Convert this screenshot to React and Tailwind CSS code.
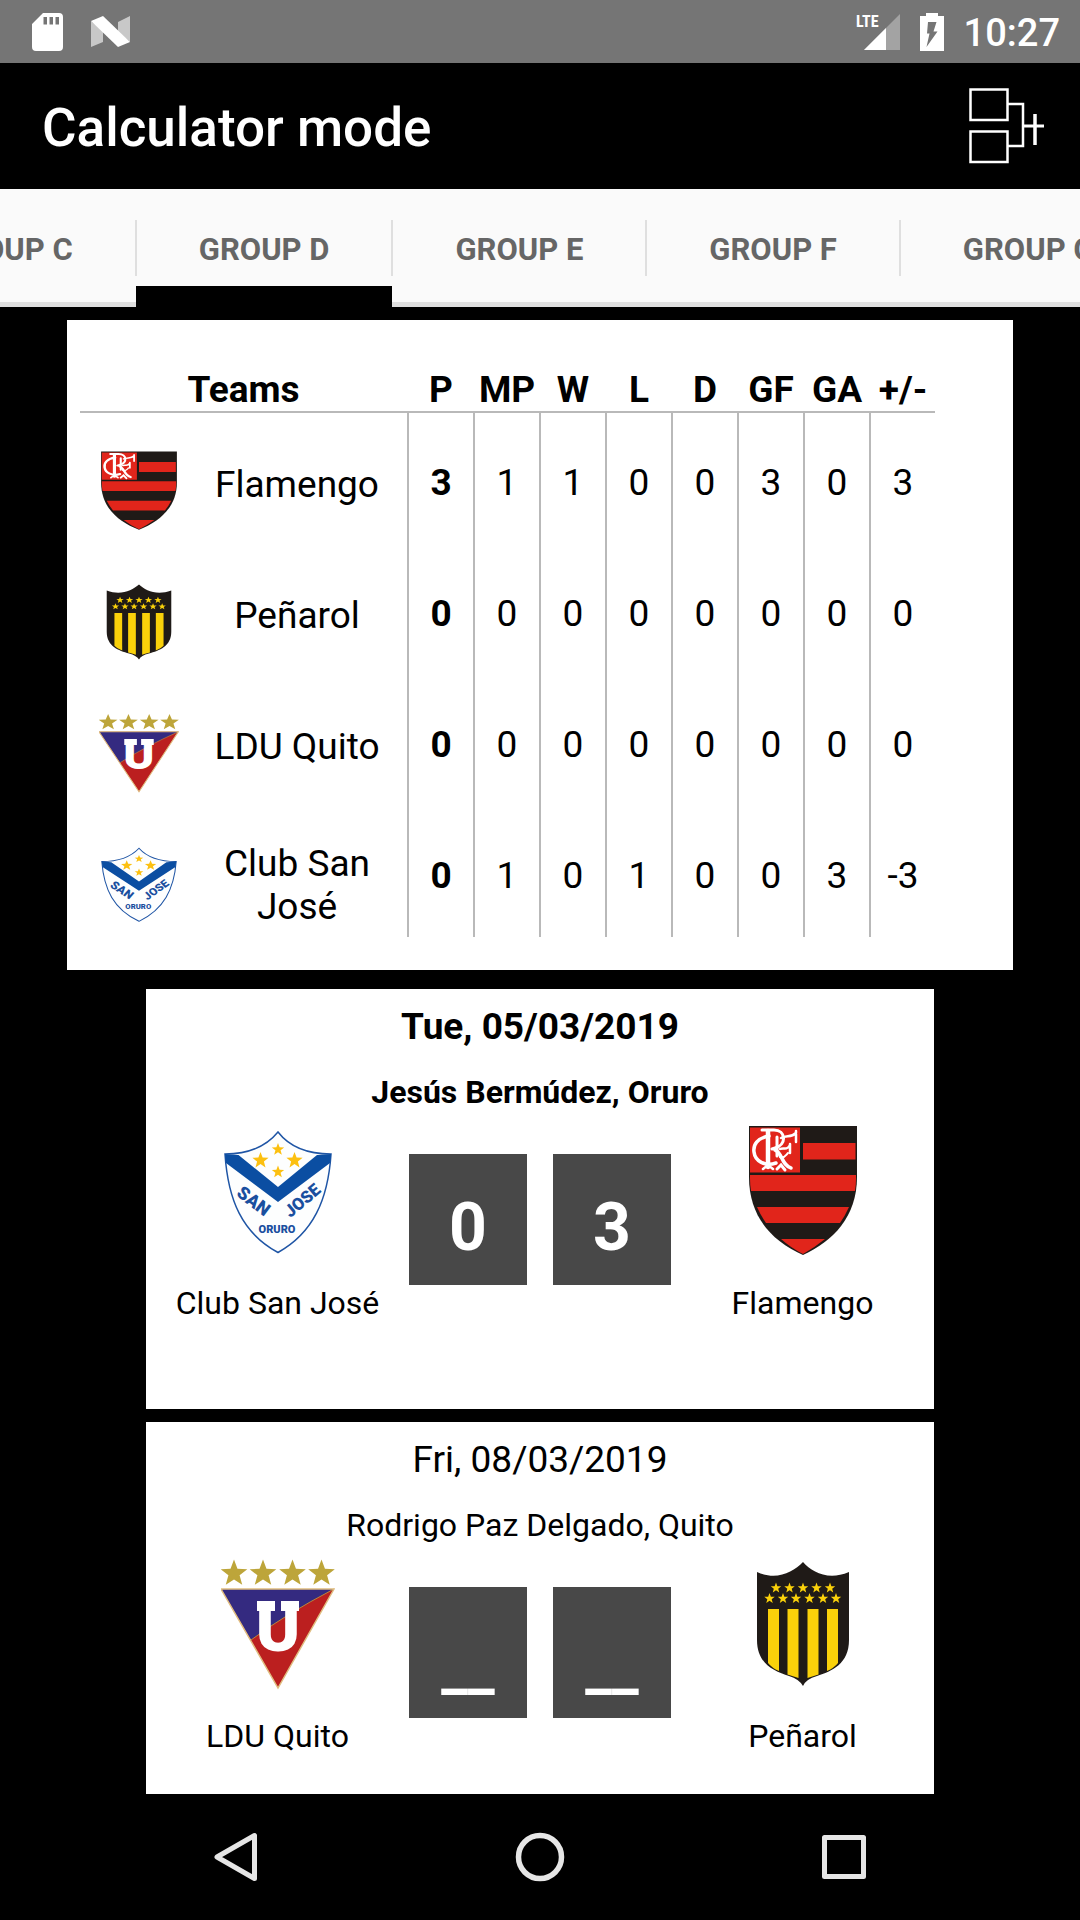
import React, { useState } from 'react';

const Star = ({ cx, cy, r, fill }) => {
  const points = Array.from({ length: 10 }, (_, i) => {
    const radius = i % 2 === 0 ? r : r * 0.42;
    const angle = (Math.PI / 5) * i - Math.PI / 2;
    return `${cx + radius * Math.cos(angle)},${cy + radius * Math.sin(angle)}`;
  }).join(' ');

  return <polygon points={points} fill={fill} />;
};

const FlamengoCrest = () => (
  <>
    <path d="M4 1 H112 V52 C112 92 88 116 58 130 C27 116 4 92 4 52 Z" fill="#1f1a17" />
    <path d="M58 18 H110.5 V34.5 H58 Z" fill="#e1251b" />
    <path d="M5 2.5 H55 V47.5 H5 Z" fill="#e1251b" />
    <path d="M5 50 H111 V54 Q111 60 110 66 H6 Q5 60 5 54 Z" fill="#e1251b" />
    <path d="M12 82 H104 Q100 91 95 98 H21 Q16 91 12 82 Z" fill="#e1251b" />
    <path d="M36 114 H80 Q69 123 58 129 Q46 123 36 114 Z" fill="#e1251b" />
    {/* interlaced monogram */}
    <g fill="none" stroke="#fff" strokeLinecap="round">
      <path d="M24 11 C12 13 8 20 9 27 C10 36 20 42 31 38" strokeWidth="3.5" />
      <path d="M23 6 V42" strokeWidth="4.5" />
      <path d="M17 5 H29 C41 5 42 20 30 23 L27 24" strokeWidth="3" />
      <path d="M30 25 C37 27 37 41 46 43" strokeWidth="3.500" />
      <path d="M18 44 L23 40 L28 44" strokeWidth="2.500" />
      <path d="M32 12 V31 M32 44 L36 40 L40 45" strokeWidth="3" />
      <path d="M36 13 C42 10 46 13 51 8 M51 6 V17" strokeWidth="2.500" />
      <path d="M35 24 C39 22 42 26 45 20 M45 19 V28" strokeWidth="2.500" />
      <path d="M35 32 C39 34 41 30 43 28" strokeWidth="2" />
    </g>
  </>
);

const PenarolCrest = () => (
  <>
    <path
      d="M58 4 C48 14 32 23 12 14 V82 C12 106 29 113 44 118 Q54 121 58 128 Q61 121 72 118 C87 113 104 106 104 82 V14 C83 23 67 14 58 4 Z"
      fill="#1f1a17"
    />
    {[31, 44.5, 58, 71.5, 85].map((x) => (
      <Star key={x} cx={x} cy={30} r={5.5} fill="#fad10a" />
    ))}
    {[24.5, 38, 51, 64.5, 78, 91].map((x) => (
      <Star key={x} cx={x} cy={40.5} r={5.5} fill="#fad10a" />
    ))}
    <g fill="#fad10a">
      <path d="M23 51 H34 V113 Q27 110 23 105 Z" />
      <path d="M42.5 51 H53.500 V120 Q48 118 42.5 116.5 Z" />
      <path d="M62.500 51 H73.500 V116.5 Q68 118 62.500 120 Z" />
      <path d="M82 51 H93 V105 Q89 110 82 113 Z" />
    </g>
  </>
);

const LduCrest = () => (
  <>
    {[14, 43, 72.5, 101.5].map((x) => (
      <Star key={x} cx={x} cy={15.5} r={14} fill="#bda53a" />
    ))}
    <path d="M1 31 H114 L58 130 Z" fill="#bb1f1f" />
    <path d="M1 31 H114 Q66 56 31 82 Z" fill="#342a80" />
    <path d="M114 31 Q66 56 31 82" fill="none" stroke="#b8863c" strokeWidth="1" />
    <path d="M1 31 H114 L58 130 Z" fill="none" stroke="#e0bd80" strokeWidth="1.5" />
    <text
      x="58"
      y="93"
      textAnchor="middle"
      fontFamily="Roboto, sans-serif"
      fontWeight="900"
      fontSize="67"
      fill="#fff"
    >
      U
    </text>
    <path d="M37 43 H55 V53 H37 Z M61 43 H79 V53 H61 Z" fill="#fff" />
  </>
);

const SanJoseCrest = () => (
  <>
    <path
      d="M58 7 Q40 29 5 29 C8 75 22 108 58 127.5 C93 108 108 75 111 29 Q75 29 58 7 Z"
      fill="#fdfefe"
      stroke="#1f55a5"
      strokeWidth="1.5"
    />
    <path d="M5 29 L18.500 30 L58 62 L97 30 L111 29 L110 38 L58 77 L6 38 Z" fill="#0b4ea2" />
    <Star cx={58} cy={24.5} r={6.5} fill="#fcc010" />
    <Star cx={40.5} cy={35.5} r={8.5} fill="#fcc010" />
    <Star cx={74.5} cy={35.5} r={8.5} fill="#fcc010" />
    <Star cx={58} cy={47} r={6.5} fill="#fcc010" />
    <g fill="#1a4f9f" fontFamily="Roboto, sans-serif" fontWeight="900" textAnchor="middle">
      <text transform="translate(30 81) rotate(37)" fontSize="18">SAN</text>
      <text transform="translate(86 80) rotate(-40)" fontSize="17">JOSE</text>
      <text x="57" y="108" fontSize="11">ORURO</text>
    </g>
  </>
);

const crests = {
  flamengo: FlamengoCrest,
  penarol: PenarolCrest,
  ldu: LduCrest,
  sanjose: SanJoseCrest,
};

const Crest = ({ team, className }) => {
  const Drawing = crests[team];
  return (
    <svg viewBox="1 0 114 132" preserveAspectRatio="none" className={className} aria-hidden="true">
      <Drawing />
    </svg>
  );
};

const groups = ['C', 'D', 'E', 'F', 'G'];

const columns = ['P', 'MP', 'W', 'L', 'D', 'GF', 'GA', '+/-'];

const standings = [
  { team: 'flamengo', name: 'Flamengo', stats: [3, 1, 1, 0, 0, 3, 0, 3] },
  { team: 'penarol', name: 'Peñarol', stats: [0, 0, 0, 0, 0, 0, 0, 0] },
  { team: 'ldu', name: 'LDU Quito', stats: [0, 0, 0, 0, 0, 0, 0, 0] },
  { team: 'sanjose', name: 'Club San José', twoLines: true, stats: [0, 1, 0, 1, 0, 0, 3, -3] },
];

const matches = [
  {
    date: 'Tue, 05/03/2019',
    stadium: 'Jesús Bermúdez, Oruro',
    played: true,
    home: { team: 'sanjose', name: 'Club San José', score: '0' },
    away: { team: 'flamengo', name: 'Flamengo', score: '3' },
  },
  {
    date: 'Fri, 08/03/2019',
    stadium: 'Rodrigo Paz Delgado, Quito',
    played: false,
    home: { team: 'ldu', name: 'LDU Quito', score: '__' },
    away: { team: 'penarol', name: 'Peñarol', score: '__' },
  },
];

const StatusBar = () => (
  <div className="flex h-[63px] shrink-0 items-center justify-between bg-[#757575] pl-8 pr-5 text-white">
    <div className="flex items-center gap-7">
      <svg width="31" height="38" viewBox="0 0 31 38" aria-hidden="true">
        <path
          fillRule="evenodd"
          fill="#fff"
          d="M11 0 H27 Q31 0 31 4 V34 Q31 38 27 38 H4 Q0 38 0 34 V11 Z M11.5 4 V11.5 H15 V4 Z M17.5 4 V11.5 H21 V4 Z M23.5 4 V11.5 H27 V4 Z"
        />
      </svg>
      <svg width="39" height="32" viewBox="0 0 39 32" aria-hidden="true">
        <path d="M0 5 L12 15 V26 L0 31 Z M27 6 L39 0 V26 L27 16 Z" fill="#c8c8c8" />
        <path d="M0 5 L12 0 L39 26 L27 31 Z" fill="#fff" />
      </svg>
    </div>
    <div className="flex items-center gap-5">
      <svg width="44" height="38" viewBox="0 0 44 38" aria-hidden="true">
        <path d="M8 37 L44 1 V37 Z" fill="#a3a3a3" />
        <path d="M8 37 L30 15 V37 Z" fill="#fff" />
        <text
          x="0"
          y="14"
          fontSize="16"
          fontWeight="700"
          fontFamily="Roboto Condensed, Liberation Sans Narrow, Roboto, sans-serif"
          fill="#fff"
        >
          LTE
        </text>
      </svg>
      <svg width="24" height="38" viewBox="0 0 24 38" aria-hidden="true">
        <path d="M0 3 H6 V0 H18 V3 H24 V38 H0 Z" fill="#fff" />
        <path d="M8 9 H16.5 L13.5 18.5 H17.5 L6.5 34 L9.5 20.5 H7 Z" fill="#757575" />
      </svg>
      <span className="pt-0.5 text-[38px] font-medium leading-[44px]">10:27</span>
    </div>
  </div>
);

const TitleBar = () => (
  <header className="flex h-[126px] shrink-0 items-center justify-between pl-[42px] pr-9">
    <h1 className="pt-1 text-[53px] font-medium leading-[64px] text-white">Calculator mode</h1>
    <button type="button" aria-label="Knockout bracket">
      <svg width="75" height="76" viewBox="0 0 75 76" fill="none" stroke="#fff" aria-hidden="true">
        <path d="M1.5 1.5 H38.5 V32 H1.5 Z M1.5 43.5 H38.5 V74 H1.5 Z" strokeWidth="2.5" />
        <path d="M39 16 H54 V58 H39" strokeWidth="2.5" />
        <path d="M54 38 H75" strokeWidth="3" />
        <path d="M66 26 V57" strokeWidth="3.5" />
      </svg>
    </button>
  </header>
);

const Tabs = ({ active, onChange }) => (
  <nav className="flex h-[118px] shrink-0 overflow-hidden bg-[#fafafa]">
    <div className="-ml-[121px] flex shrink-0">
      {groups.map((group) => (
        <button
          key={group}
          type="button"
          onClick={() => onChange(group)}
          className="relative shrink-0 border-b-[5px] border-[#dfdfdf] px-[63px] pt-2 text-[31px] font-bold leading-[38px] text-[#666]"
        >
          <span className="absolute -left-px top-[31px] h-14 w-0.5 bg-[#dfdfdf]" />
          GROUP {group}
          {active === group && <span className="absolute inset-x-0 -bottom-[5px] h-[21px] bg-black" />}
        </button>
      ))}
    </div>
  </nav>
);

const Standings = () => (
  <section className="mx-[67px] bg-white px-[13px] pb-[33px] pt-12">
    <table className="w-[855px] table-fixed border-separate border-spacing-0 text-center text-[37px] leading-[43px]">
      <thead>
        <tr>
          <th colSpan={2} className="w-[327px] border-b-2 border-[#b9b9b9] p-0">Teams</th>
          {columns.map((column) => (
            <th key={column} className="w-[66px] whitespace-nowrap border-b-2 border-[#b9b9b9] p-0 pl-0.5">
              {column}
            </th>
          ))}
        </tr>
      </thead>
      <tbody>
        {standings.map((row) => (
          <tr key={row.team} className="h-[131px] align-top">
            <td colSpan={2} className="p-0">
              <div className={row.twoLines ? 'flex pt-9' : 'flex pt-[50px]'}>
                <div className="flex w-[118px] shrink-0 justify-center">
                  <Crest
                    team={row.team}
                    className={row.twoLines ? 'mt-0.5 size-20' : '-mt-3 size-20'}
                  />
                </div>
                <span className="w-[198px]">{row.name}</span>
              </div>
            </td>
            {row.stats.map((value, i) => (
              <td
                key={columns[i]}
                className={`border-l-2 border-[#b9b9b9] p-0 pt-12 ${i === 0 ? 'font-bold' : ''}`}
              >
                {value}
              </td>
            ))}
          </tr>
        ))}
      </tbody>
    </table>
  </section>
);

const MatchTeam = ({ team, name }) => (
  <div className="flex flex-1 flex-col items-center">
    <Crest team={team} className="h-[132px] w-[114px]" />
    <span className="mt-[27px] whitespace-nowrap text-[32px] leading-[38px]">{name}</span>
  </div>
);

const ScoreInput = ({ label, score, played }) => (
  <input
    type="text"
    aria-label={label}
    defaultValue={score}
    className={`mt-[29px] h-[131px] w-[118px] bg-[#484848] text-center font-bold text-white ${
      played ? 'pt-4 text-[66px]' : 'pt-8 text-[60px]'
    }`}
  />
);

const MatchCard = ({ match }) => (
  <section className="mx-[146px] shrink-0 bg-white pb-[87px] pt-4 text-center">
    <div className={match.played ? 'font-bold' : ''}>
      <h2 className="text-[37px] leading-[44px]">{match.date}</h2>
      <p className="mt-6 text-[32px] leading-[38px]">{match.stadium}</p>
    </div>
    <div className="mt-3.5 flex items-start">
      <MatchTeam team={match.home.team} name={match.home.name} />
      <div className="flex gap-[26px]">
        <ScoreInput
          label={`${match.home.name} goals`}
          score={match.home.score}
          played={match.played}
        />
        <ScoreInput
          label={`${match.away.name} goals`}
          score={match.away.score}
          played={match.played}
        />
      </div>
      <MatchTeam team={match.away.team} name={match.away.name} />
    </div>
  </section>
);

const NavBar = () => (
  <nav className="grid h-[126px] shrink-0 grid-cols-3 bg-black px-[84px]">
    <button type="button" aria-label="Back" className="flex items-center justify-center">
      <svg width="50" height="50" viewBox="0 0 50 50" fill="none" stroke="#e6e6e6" strokeWidth="5" strokeLinejoin="round">
        <path d="M43.5 3.5 V46.5 L6 25 Z" />
      </svg>
    </button>
    <button type="button" aria-label="Home" className="flex items-center justify-center">
      <svg width="50" height="50" viewBox="0 0 50 50" fill="none" stroke="#e6e6e6" strokeWidth="5.5">
        <circle cx="25" cy="25" r="21.5" />
      </svg>
    </button>
    <button type="button" aria-label="Recent apps" className="flex items-center justify-center">
      <svg width="50" height="50" viewBox="0 0 50 50" fill="none" stroke="#e6e6e6" strokeWidth="5" strokeLinejoin="round">
        <path d="M5.5 5.5 H44.5 V44.5 H5.5 Z" />
      </svg>
    </button>
  </nav>
);

const App = () => {
  const [group, setGroup] = useState('D');

  return (
    <div className="flex h-screen flex-col overflow-hidden bg-black font-['Roboto',sans-serif] text-black">
      <StatusBar />
      <TitleBar />
      <Tabs active={group} onChange={setGroup} />
      <main className="min-h-0 flex-1 overflow-hidden pt-[13px]">
        <Standings />
        <div className="mt-[19px] flex flex-col gap-[13px]">
          {matches.map((match) => (
            <MatchCard key={match.date} match={match} />
          ))}
        </div>
      </main>
      <NavBar />
    </div>
  );
};

export default App;
